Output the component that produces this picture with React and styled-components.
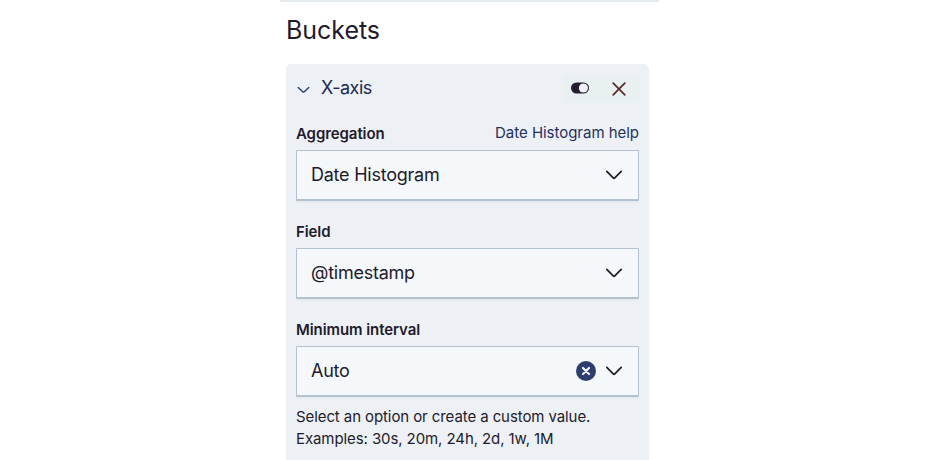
import React from "react";
import styled, { createGlobalStyle } from "styled-components";

const GlobalStyle = createGlobalStyle`
  * { box-sizing: border-box; }
  body {
    margin: 0;
    background: #fff;
    color: #231a2b;
    font-family: Inter, "Liberation Sans", sans-serif;
    overflow: hidden;
  }
`;

const Page = styled.main`
  width: 379px;
  height: 460px;
  margin-left: 280px;
  padding: 0 10px 0 6px;
  overflow: hidden;
`;

const Divider = styled.div`
  height: 2px;
  margin: 0 -10px 0 -6px;
  background: #e6ebf0;
`;

const Title = styled.h1`
  margin: 11px 0 17px;
  font-size: 25px;
  line-height: 34px;
  font-weight: 400;
  letter-spacing: -0.05px;
`;

const Panel = styled.section`
  width: 363px;
  height: 420px;
  padding: 11px 10px;
  border-radius: 5px 5px 0 0;
  background: #edf1f6;
`;

const PanelHeader = styled.header`
  display: flex;
  align-items: center;
  height: 27px;
  margin-bottom: 18px;
`;

const AxisToggle = styled.button`
  display: flex;
  align-items: center;
  gap: 11px;
  padding: 0 0 2px 1px;
  border: 0;
  background: none;
  color: #20284f;
  font: 400 18px/24px Inter, sans-serif;
  letter-spacing: -0.5px;
  svg { margin-top: 5px; }
`;

const Actions = styled.div`
  display: flex;
  align-items: center;
  gap: 23px;
  width: 76px;
  height: 27px;
  margin-left: auto;
  padding-left: 8px;
  border-radius: 3px;
  background: #e9f0f2;
`;

const IconButton = styled.button`
  display: flex;
  padding: 0 0 ${({ $lift = 0 }) => $lift}px;
  border: 0;
  background: none;
  color: inherit;
`;

const Field = styled.div`
  height: 98px;
`;

const FieldHead = styled.div`
  display: flex;
  justify-content: space-between;
  height: 30px;
  line-height: 26px;
  white-space: nowrap;
`;

const Label = styled.label`
  font-size: 15px;
  font-weight: 600;
  line-height: 27px;
  letter-spacing: -0.08px;
`;

const HelpLink = styled.a`
  color: #1f2f5e;
  font-size: 15px;
  line-height: 25px;
  letter-spacing: -0.03px;
`;

const Select = styled.div`
  display: flex;
  align-items: center;
  height: 51px;
  padding: 0 16px 1px 14px;
  border: 1px solid #b3c0ce;
  border-bottom-width: 2px;
  border-radius: 1px;
  background: #f4f8fb;
  box-shadow: 0 2px 1px #e5ebef;
  font-size: 18px;
  letter-spacing: -0.24px;
`;

const Controls = styled.div`
  display: flex;
  align-items: center;
  gap: 10px;
  margin-left: auto;
  padding-top: 1px;
`;

const Help = styled.p`
  margin: -8px 0 0;
  font-size: 15px;
  line-height: 22px;
  letter-spacing: -0.09px;
  white-space: nowrap;
`;

const Chevron = () => (
  <svg width="16" height="10" viewBox="0 0 16 10" fill="none" stroke="#211b2a" strokeWidth="1.7" strokeLinecap="round" strokeLinejoin="round">
    <path d="M.8 1.3 7.2 7.9q.8.7 1.6 0L15.2 1.3" />
  </svg>
);

const SmallChevron = () => (
  <svg width="13" height="8" viewBox="0 0 13 8" fill="none" stroke="#263f79" strokeWidth="1.4" strokeLinecap="round" strokeLinejoin="round">
    <path d="M1.2 1.5 6 5.9q.5.4 1 0l4.8-4.4" />
  </svg>
);

const ToggleIcon = () => (
  <svg width="18" height="12" viewBox="0 0 18 12">
    <rect y=".5" width="18" height="11" rx="5.5" fill="#251c30" />
    <circle cx="12.4" cy="6" r="4.6" fill="#edf2f7" />
  </svg>
);

const CrossIcon = () => (
  <svg width="14" height="14" viewBox="0 0 14 14" fill="none" stroke="#572c22" strokeWidth="1.7" strokeLinecap="round">
    <path d="m1.2 1.2 11.6 11.6M12.8 1.2 1.2 12.8" />
  </svg>
);

const ClearIcon = () => (
  <svg width="20" height="20" viewBox="0 0 20 20">
    <circle cx="10" cy="10" r="10" fill="#2d3d70" />
    <path d="m7 7 6 6m0-6-6 6" fill="none" stroke="#f4f8fb" strokeWidth="2.2" strokeLinecap="round" />
  </svg>
);

function SelectField({ label, value, help, clearable }) {
  return (
    <Field>
      <FieldHead>
        <Label>{label}</Label>
        {help && <HelpLink>{help}</HelpLink>}
      </FieldHead>
      <Select>
        <span>{value}</span>
        <Controls>
          {clearable && <IconButton aria-label="Clear"><ClearIcon /></IconButton>}
          <Chevron />
        </Controls>
      </Select>
    </Field>
  );
}

export default function App() {
  return (
    <>
      <GlobalStyle />
      <Page>
        <Divider />
        <Title>Buckets</Title>
        <Panel>
          <PanelHeader>
            <AxisToggle><SmallChevron />X-axis</AxisToggle>
            <Actions>
              <IconButton aria-label="Toggle bucket" $lift={2}><ToggleIcon /></IconButton>
              <IconButton aria-label="Remove bucket"><CrossIcon /></IconButton>
            </Actions>
          </PanelHeader>
          <SelectField label="Aggregation" value="Date Histogram" help="Date Histogram help" />
          <SelectField label="Field" value="@timestamp" />
          <SelectField label="Minimum interval" value="Auto" clearable />
          <Help>
            Select an option or create a custom value.<br />
            Examples: 30s, 20m, 24h, 2d, 1w, 1M
          </Help>
        </Panel>
      </Page>
    </>
  );
}
